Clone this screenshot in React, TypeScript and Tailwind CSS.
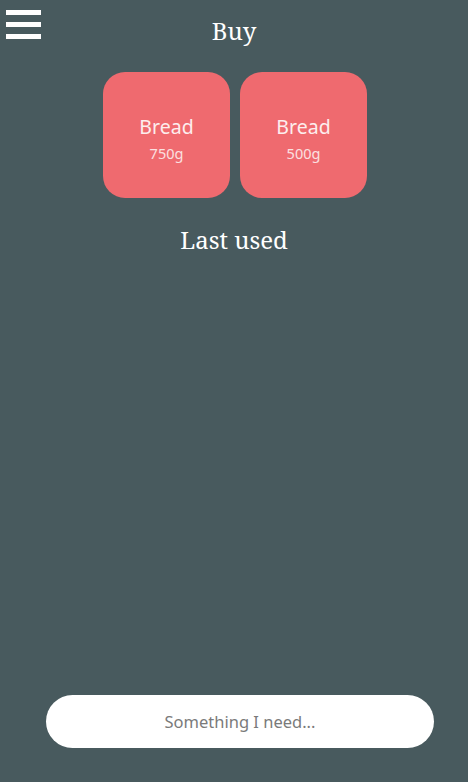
import React, { useState } from "react";

const items = [
  { name: "Bread", amount: "750g" },
  { name: "Bread", amount: "500g" },
];

export default function App() {
  const [query, setQuery] = useState("");

  return (
    <div className="h-[782px] w-full bg-[#485a5e] flex flex-col font-['Noto_Sans',sans-serif]">
      {/* Header */}
      <div className="grid grid-cols-[1fr_auto_1fr] items-start pt-[10px]">
        <button className="flex flex-col gap-[7px] ml-[6px] w-[35px]">
          <span className="block h-[5px] w-[35px] bg-white" />
          <span className="block h-[5px] w-[35px] bg-white" />
          <span className="block h-[5px] w-[35px] bg-white" />
        </button>
        <h1 className="font-['Noto_Serif','DejaVu_Serif',serif] text-[24px] leading-[42px] text-white">
          Buy
        </h1>
        <div />
      </div>

      {/* Items */}
      <div className="flex justify-center gap-[10px] mt-[20px] pl-[2px]">
        {items.map((it, i) => (
          <div
            key={i}
            className="w-[127px] h-[126px] rounded-[22px] bg-[#ef6a6f] flex flex-col items-center justify-center text-[#fdeeee]"
          >
            <span className="text-[19.5px] leading-[24px] mt-[7px]">{it.name}</span>
            <span className="text-[14.5px] leading-[20px] mt-[4px] text-[#fbe0e0]">{it.amount}</span>
          </div>
        ))}
      </div>

      <h2 className="text-center font-['Noto_Serif','DejaVu_Serif',serif] text-[24px] leading-[32px] text-white mt-[26px]">
        Last used
      </h2>

      <div className="flex-1" />

      {/* Input */}
      <div className="flex justify-center mb-[34px] pl-[12px]">
        <input
          value={query}
          onChange={(e) => setQuery(e.target.value)}
          placeholder="Something I need..."
          className="w-[388px] h-[53px] rounded-full bg-white text-center text-[16.5px] text-[#555] placeholder:text-[#7a7a7a] outline-none"
        />
      </div>
    </div>
  );
}
